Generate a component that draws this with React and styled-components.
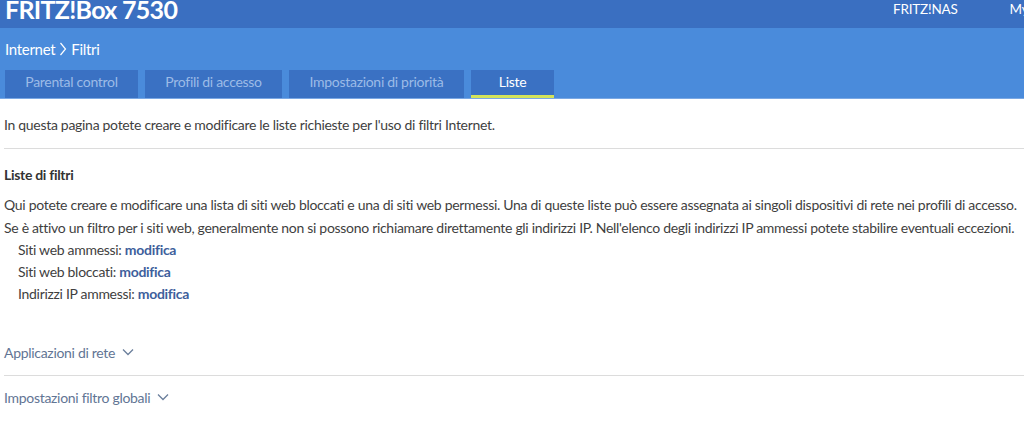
import React from "react";
import styled, { createGlobalStyle } from "styled-components";

const GlobalStyle = createGlobalStyle`
  html, body {
    margin: 0;
    padding: 0;
    background: #fff;
  }
  body {
    font-family: Lato, "Open Sans", sans-serif;
    color: #3f3f3f;
    letter-spacing: -0.3px;
    overflow: hidden;
  }
`;

const tabs = [
  { label: "Parental control", width: 133 },
  { label: "Profili di accesso", width: 137 },
  { label: "Impostazioni di priorità", width: 175 },
  { label: "Liste", width: 83, active: true },
];

const links = ["Siti web ammessi", "Siti web bloccati", "Indirizzi IP ammessi"];

function Chevron() {
  return (
    <svg width="12" height="8" viewBox="0 0 12 8" fill="none">
      <path d="M1 1.5l5 5 5-5" stroke="#6b7f9c" strokeWidth="1.3" />
    </svg>
  );
}

function CrumbArrow() {
  return (
    <svg width="8" height="14" viewBox="0 0 8 14" fill="none">
      <path d="M1.5 1l5 6-5 6" stroke="#fff" strokeWidth="1.2" />
    </svg>
  );
}

export default function App() {
  return (
    <>
      <GlobalStyle />
      <TopBar>
        <Brand>FRITZ!Box 7530</Brand>
        <TopNav>
          <TopLink>FRITZ!NAS</TopLink>
          <TopLink>MyFRITZ!</TopLink>
        </TopNav>
      </TopBar>
      <SubBand>
        <Crumbs>
          Internet <CrumbArrow /> Filtri
        </Crumbs>
        <TabRow>
          {tabs.map((t) => (
            <Tab key={t.label} $w={t.width} $active={t.active}>
              {t.label}
            </Tab>
          ))}
        </TabRow>
      </SubBand>
      <Content>
        <Intro>
          In questa pagina potete creare e modificare le liste richieste per
          l'uso di filtri Internet.
        </Intro>
        <Divider />
        <Section>
          <SectionTitle>Liste di filtri</SectionTitle>
          <Para>
            Qui potete creare e modificare una lista di siti web bloccati e una
            di siti web permessi. Una di queste liste può essere assegnata ai
            singoli dispositivi di rete nei profili di accesso.
            <br />
            Se è attivo un filtro per i siti web, generalmente non si possono
            richiamare direttamente gli indirizzi IP. Nell'elenco degli
            indirizzi IP ammessi potete stabilire eventuali eccezioni.
          </Para>
          <LinkList>
            {links.map((l) => (
              <LinkRow key={l}>
                {l}: <EditLink>modifica</EditLink>
              </LinkRow>
            ))}
          </LinkList>
        </Section>
        <Accordion>
          Applicazioni di rete <Chevron />
        </Accordion>
        <Divider />
        <Accordion $last>
          Impostazioni filtro globali <Chevron />
        </Accordion>
      </Content>
    </>
  );
}

const TopBar = styled.div`
  height: 28px;
  background: #3a6fc1;
  display: flex;
  align-items: center;
  padding-left: 5px;
  overflow: hidden;
  white-space: nowrap;
`;

const Brand = styled.div`
  flex: 0 0 888px;
  color: #fff;
  font-size: 25px;
  font-weight: 700;
  line-height: 1;
  margin-top: -10px;
  letter-spacing: -0.7px;
`;

const TopNav = styled.div`
  display: flex;
  gap: 52px;
  margin-top: -10px;
`;

const TopLink = styled.span`
  color: #fff;
  font-size: 13.5px;
  letter-spacing: -0.2px;
`;

const SubBand = styled.div`
  background: #4a8bdb;
  padding: 12px 0 0 5px;
  height: 58px;
  display: flex;
  flex-direction: column;
  justify-content: space-between;
  border-bottom: 1px solid #7aa8e4;
`;

const Crumbs = styled.div`
  display: flex;
  align-items: center;
  gap: 4px;
  color: #fff;
  font-size: 15px;
  line-height: 18px;
`;

const TabRow = styled.div`
  display: flex;
  gap: 7px;
`;

const Tab = styled.div`
  width: ${({ $w }) => $w}px;
  height: 28px;
  box-sizing: border-box;
  background: #3a71c3;
  color: ${({ $active }) => ($active ? "#fff" : "#9cbbe7")};
  font-size: 14px;
  display: flex;
  align-items: center;
  justify-content: center;
  border-bottom: 3px solid
    ${({ $active }) => ($active ? "#d3e35a" : "transparent")};
  padding-bottom: 2px;
`;

const Content = styled.div`
  padding: 0 0 0 4px;
`;

const Intro = styled.p`
  margin: 0;
  padding: 17px 0 14px;
  font-size: 14px;
  line-height: 18px;
`;

const Divider = styled.hr`
  margin: 0;
  border: none;
  border-top: 1px solid #dcdcdc;
`;

const Section = styled.div`
  padding-top: 17px;
  margin-bottom: 24px;
`;

const SectionTitle = styled.div`
  font-size: 14px;
  font-weight: 700;
  line-height: 18px;
  color: #333;
  margin-bottom: 10px;
`;

const Para = styled.p`
  margin: 0;
  font-size: 14px;
  line-height: 22.5px;
`;

const LinkList = styled.div`
  padding-left: 14px;
`;

const LinkRow = styled.div`
  font-size: 14px;
  line-height: 22px;
`;

const EditLink = styled.a`
  color: #3e5f9c;
  font-weight: 700;
  cursor: pointer;
`;

const Accordion = styled.div`
  display: flex;
  align-items: center;
  gap: 7px;
  color: #627594;
  font-size: 14px;
  height: ${({ $last }) => ($last ? "42px" : "46px")};
`;
